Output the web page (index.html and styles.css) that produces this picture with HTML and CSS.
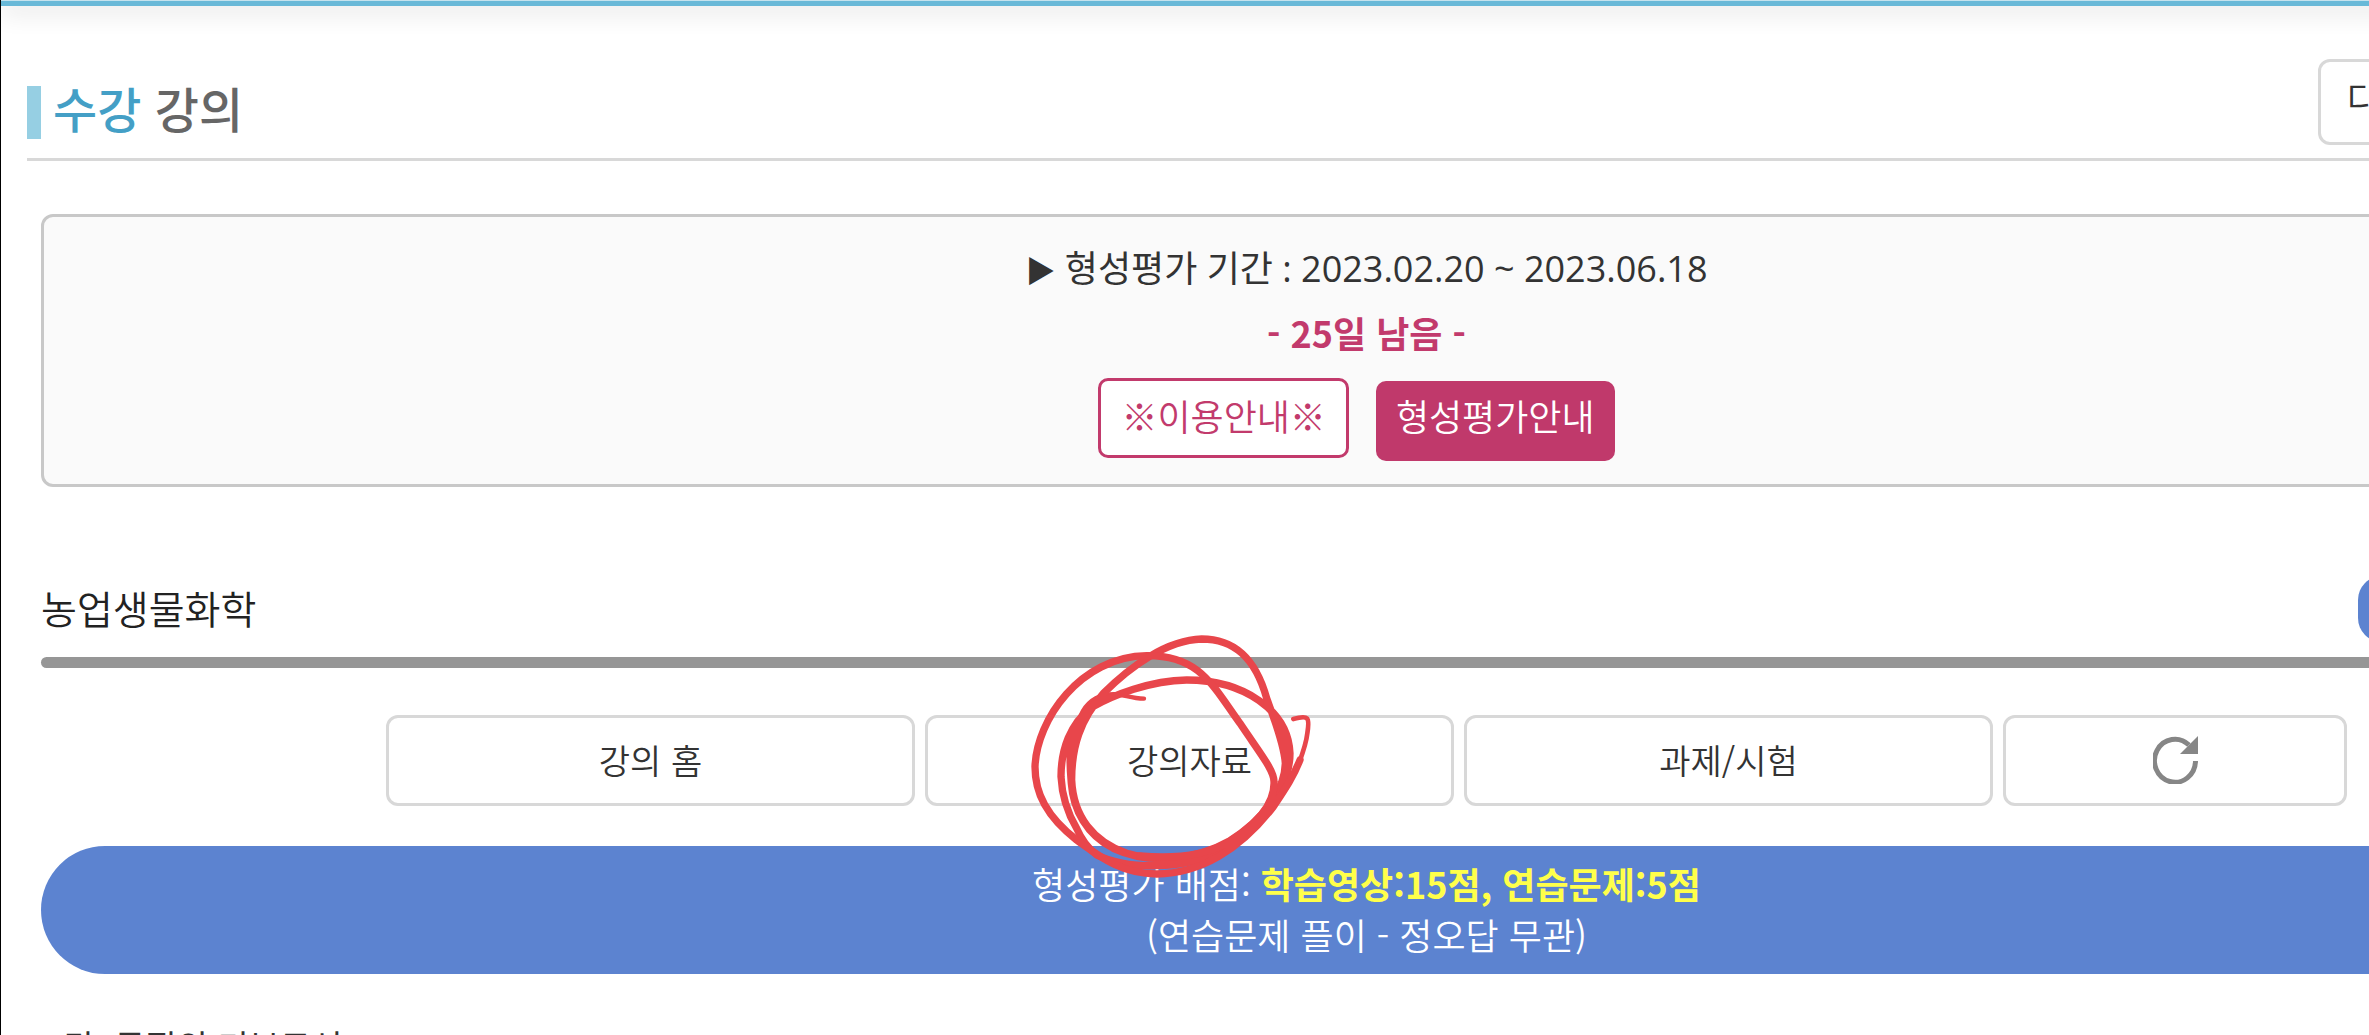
FILE: index.html
```
<!DOCTYPE html>
<html lang="ko">
<head>
    <meta charset="UTF-8">
    <meta name="viewport" content="width=device-width, initial-scale=1.0">
    <title>수강 강의</title>
    <link rel="stylesheet" href="styles.css">
</head>
<body>
    <div class="page">
        <div class="topbar"></div>
        <header class="header">
            <h1 class="title"><span>수강</span> 강의</h1>
            <button type="button" class="btn btn-other">다른 강의 선택</button>
        </header>
        <main class="content">
            <section class="notice">
                <p class="period"><span class="arrow">▶</span> 형성평가 기간 : 2023.02.20 ~ 2023.06.18</p>
                <p class="remain">- 25일 남음 -</p>
                <div class="notice-buttons">
                    <button type="button" class="btn-guide">※이용안내※</button>
                    <button type="button" class="btn-guide filled">형성평가안내</button>
                </div>
            </section>
            <div class="subject">
                <h2>농업생물화학</h2>
                <button type="button" class="btn-info">강의계획서</button>
            </div>
            <nav class="tabs">
                <button type="button" class="btn tab">강의 홈</button>
                <div class="marked">
                    <button type="button" class="btn tab">강의자료</button>
                    <svg class="scribble" viewBox="0 0 1140 840" aria-hidden="true">
                        <path stroke-width="13" d="M492 236 C440 234 420 215 375 225 C335 233 308 262 295 305"/>
                        <path stroke-width="22" d="M295 305 C262 370 270 440 274 490 C280 570 320 645 400 685 C500 732 640 725 750 662 C850 600 914 510 916 430 C912 370 880 290 860 235 C825 110 760 57 665 57 C560 60 450 140 370 220 C300 300 275 380 275 480 C280 590 340 665 440 700 C550 732 700 710 790 640 C880 565 930 480 930 400 C925 270 790 180 620 180 C510 182 400 225 335 262 C270 310 243 390 243 470 C247 550 275 600 290 625 C305 660 325 685 350 705 C440 748 610 752 720 692 C820 640 885 560 910 490"/>
                        <path stroke-width="22" d="M960 420 C940 470 920 500 880 560 C780 690 660 760 530 762 C420 760 360 710 290 660 C200 590 165 520 165 440 C170 300 300 110 500 107 C660 105 700 200 780 310 C840 400 882 450 882 485 C885 560 820 620 740 670 C660 714 560 715 480 708"/>
                        <path stroke-width="14" d="M940 297 C985 285 990 290 982 340 C979 370 970 395 955 435"/>
                    </svg>
                </div>
                <button type="button" class="btn tab">과제/시험</button>
                <button type="button" class="btn tab tab-small" aria-label="새로고침">
                    <svg class="refresh" viewBox="0 0 45 48" aria-hidden="true">
                        <path d="M42.500 25 A20.500 21.500 0 1 1 36 9" fill="none" stroke="#868686" stroke-width="5"/>
                        <path d="M45 0 V18 H27 Z" fill="#868686"/>
                    </svg>
                </button>
            </nav>
            <div class="score">
                <p>형성평가 배점: <strong>학습영상:15점, 연습문제:5점</strong></p>
                <p>(연습문제 플이 - 정오답 무관)</p>
            </div>
            <h3 class="lecture">1강. 물질의 기본구성</h3>
        </main>
    </div>
</body>
</html>
```
FILE: styles.css
```
* {
    box-sizing: border-box;
}
html {
    height: 100%;
    overflow: hidden;
}
body {
    height: 100%;
    margin: 0;
    overflow: hidden;
    border-left: 1px solid #000;
    background-color: #fff;
    color: #333;
    font-family: "Noto Sans CJK KR", sans-serif;
    font-size: 36px;
    font-weight: 350;
    line-height: 48px;
}
h1, h2, h3, p {
    margin: 0;
    font-size: inherit;
    font-weight: inherit;
}
button {
    margin: 0;
    font: inherit;
    color: inherit;
    cursor: pointer;
}
/* the layout is wider than the window and runs off to the right */
.page {
    margin-right: -363px;
}
.topbar {
    height: 6px;
    border-top: 1px solid #c5e3ee;
    background-color: #69b9d8;
    box-shadow: 0 4px 24px rgba(0, 0, 0, 0.24);
}
.header {
    display: flex;
    justify-content: space-between;
    align-items: flex-start;
    height: 155px;
    margin: 0 26px;
    padding-top: 53px;
    border-bottom: 3px solid #d8d8d8;
}
.title {
    margin-top: 27px;
    padding: 0 0 11px 12px;
    border-left: 14px solid #96cfe3;
    color: #666;
    font-size: 48px;
    font-weight: 500;
    line-height: 42px;
}
.title span {
    color: #449fc6;
}
.btn {
    border: 3px solid #d8d8d8;
    border-radius: 12px;
    background-color: #fff;
}
.btn-other {
    width: 388px;
    height: 86px;
    padding: 0 26px 10px;
    text-align: left;
}
.content {
    padding: 53px 40px 0;
}
.notice {
    padding: 28px 0 23px;
    border: 3px solid #c8c8c8;
    border-radius: 12px;
    background-color: #fafafa;
    text-align: center;
}
.notice .period {
    height: 48px;
    margin-bottom: 15px;
    font-family: "Open Sans", "Noto Sans CJK KR", sans-serif;
    font-weight: 400;
}
.arrow {
    font-size: 30px;
    line-height: 30px;
}
.notice .remain {
    margin-bottom: 22px;
    color: #c23a6c;
    font-weight: 700;
}
.notice-buttons {
    display: flex;
    justify-content: center;
    align-items: baseline;
    gap: 27px;
    margin-right: 20px;
}
.btn-guide {
    padding: 10px 20px 16px;
    border: 3px solid #c23a6c;
    border-radius: 10px;
    background-color: #fff;
    color: #c23a6c;
}
.btn-guide.filled {
    padding-bottom: 22px;
    border-width: 0;
    background-color: #c0396b;
    color: #fff;
}
.subject {
    display: flex;
    justify-content: space-between;
    align-items: center;
    height: 180px;
    padding-top: 64px;
    color: #222;
    font-size: 39px;
}
.subject h2 {
    padding-bottom: 4px;
}
.btn-info {
    width: 334px;
    height: 66px;
    border: 0;
    border-radius: 24px;
    background-color: #5c83d0;
    color: #fff;
    font-size: 36px;
}
/* thick rule between the subject and the tabs */
.tabs::before {
    content: "";
    flex: 0 0 100%;
    height: 11px;
    margin-bottom: 37px;
    border-radius: 6px;
    background-color: #969696;
}
.tabs {
    display: flex;
    flex-wrap: wrap;
    justify-content: center;
    gap: 10px;
    margin-top: -10px;
}
.tab {
    width: 529px;
    height: 91px;
    padding: 0 0 2px;
    font-size: 34px;
}
.tab-small {
    width: 344px;
}
.marked {
    position: relative;
}
/* hand-drawn mark over the tab */
.scribble {
    position: absolute;
    left: 55px;
    top: -95px;
    z-index: 1;
    width: 380px;
    height: 280px;
    fill: none;
    stroke: #e8464b;
    stroke-linecap: round;
    stroke-linejoin: round;
    pointer-events: none;
}
.refresh {
    display: block;
    width: 45px;
    height: 48px;
    margin: 0 auto;
}
.score {
    margin-top: 40px;
    padding: 12px 0 14px;
    border-radius: 64px;
    background-color: #5c83d0;
    color: #fff;
    line-height: 51px;
    text-align: center;
}
.score strong {
    color: #ffff4a;
    font-weight: 700;
}
.lecture {
    margin-top: 48px;
    padding-left: 4px;
    font-size: 34px;
    font-weight: 400;
}
```
